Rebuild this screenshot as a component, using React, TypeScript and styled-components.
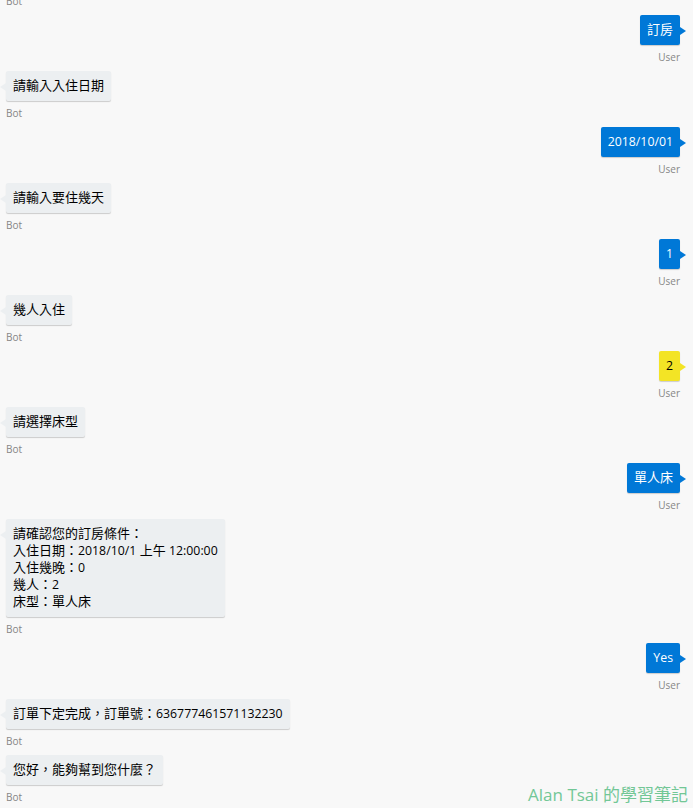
import React from "react";
import styled, { createGlobalStyle, css } from "styled-components";

const GlobalStyle = createGlobalStyle`
  html, body {
    margin: 0;
    padding: 0;
    background: #f8f8f8;
    overflow: hidden;
  }
  body {
    font-family: "Open Sans", "Noto Sans CJK TC", sans-serif;
  }
`;

type Side = "bot" | "user";

const Page = styled.div`
  width: 693px;
  height: 808px;
  overflow: hidden;
  position: relative;
  background: #f8f8f8;
`;

const List = styled.div`
  display: flex;
  flex-direction: column;
  padding: 0 13px 0 6px;
`;

const Wrapper = styled.div<{ $side: Side }>`
  display: flex;
  flex-direction: column;
  align-items: ${(p) => (p.$side === "user" ? "flex-end" : "flex-start")};
  margin-bottom: 8px;
`;

const palette = {
  bot: { bg: "#eceff1", fg: "#000000" },
  user: { bg: "#0078d7", fg: "#ffffff" },
  highlight: { bg: "#f3e425", fg: "#000000" },
};

const Bubble = styled.div<{ $side: Side; $highlight?: boolean }>`
  position: relative;
  padding: 6px 7px 7px;
  border-radius: 2px;
  box-shadow: 0 1px 1px rgba(0, 0, 0, 0.18);
  font-family: "Open Sans", "Noto Sans CJK TC", sans-serif;
  font-size: 13px;
  line-height: 17px;
  white-space: pre;
  ${(p) => {
    const c = p.$highlight ? palette.highlight : palette[p.$side];
    return css`
      background: ${c.bg};
      color: ${c.fg};
      &::before {
        content: "";
        position: absolute;
        top: 12px;
        width: 0;
        height: 0;
        border-top: 4px solid transparent;
        border-bottom: 4px solid transparent;
        ${p.$side === "user"
          ? css`
              right: -6px;
              border-left: 6px solid ${c.bg};
            `
          : css`
              left: -6px;
              border-right: 6px solid ${c.bg};
            `}
      }
    `;
  }}
`;

/* Latin runs are set a touch smaller, as the original UI font is narrower */
const Latin = styled.span`
  font-family: "Open Sans", sans-serif;
  font-size: 12.3px;
`;

const From = styled.div`
  margin-top: 6px;
  font-family: "Open Sans", sans-serif;
  font-size: 10px;
  line-height: 12px;
  color: #868686;
`;

const TopFrom = styled(From)`
  margin-top: -5px;
`;

const Watermark = styled.div`
  position: absolute;
  right: 5px;
  bottom: 2px;
  font-family: "Open Sans", "Noto Sans CJK TC", sans-serif;
  font-size: 17px;
  line-height: 22px;
  color: #72c796;
`;

type Msg = { side: Side; text: string; highlight?: boolean };

const messages: Msg[] = [
  { side: "user", text: "訂房" },
  { side: "bot", text: "請輸入入住日期" },
  { side: "user", text: "2018/10/01" },
  { side: "bot", text: "請輸入要住幾天" },
  { side: "user", text: "1" },
  { side: "bot", text: "幾人入住" },
  { side: "user", text: "2", highlight: true },
  { side: "bot", text: "請選擇床型" },
  { side: "user", text: "單人床" },
  {
    side: "bot",
    text: "請確認您的訂房條件：\n入住日期：2018/10/1 上午 12:00:00\n入住幾晚：0\n幾人：2\n床型：單人床",
  },
  { side: "user", text: "Yes" },
  { side: "bot", text: "訂單下定完成，訂單號：636777461571132230" },
  { side: "bot", text: "您好，能夠幫到您什麼？" },
];

function renderText(text: string) {
  return text
    .split(/([\u0021-\u024f][\u0020-\u024f]*[\u0021-\u024f]|[\u0021-\u024f])/)
    .filter((s) => s.length > 0)
    .map((part, i) =>
      /^[\u0021-\u024f]/.test(part) ? <Latin key={i}>{part}</Latin> : <React.Fragment key={i}>{part}</React.Fragment>
    );
}

export default function App() {
  return (
    <Page>
      <GlobalStyle />
      <List>
        <Wrapper $side="bot">
          <TopFrom>Bot</TopFrom>
        </Wrapper>
        {messages.map((m, i) => (
          <Wrapper key={i} $side={m.side}>
            <Bubble $side={m.side} $highlight={m.highlight}>
              {renderText(m.text)}
            </Bubble>
            <From>{m.side === "user" ? "User" : "Bot"}</From>
          </Wrapper>
        ))}
      </List>
      <Watermark>Alan Tsai 的學習筆記</Watermark>
    </Page>
  );
}
